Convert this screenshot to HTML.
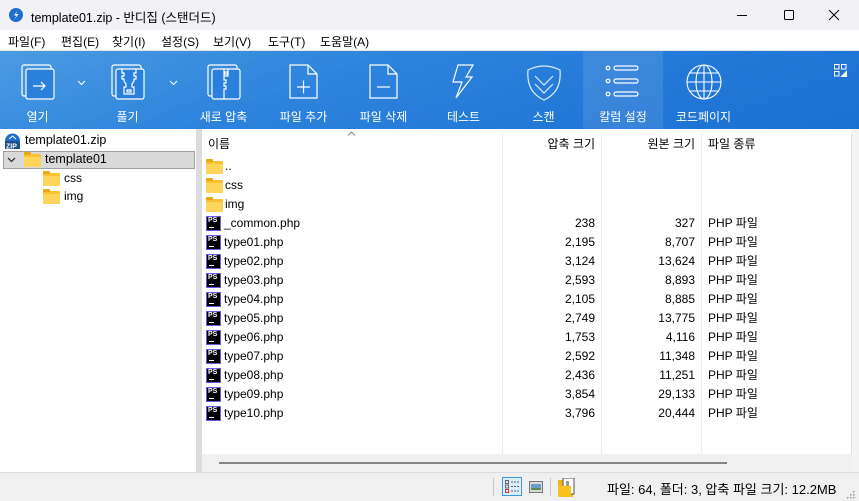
<!DOCTYPE html>
<html><head><meta charset="utf-8">
<style>
*{margin:0;padding:0;box-sizing:border-box}
body{width:859px;height:501px;overflow:hidden;background:#fff;font-family:"Liberation Sans","Noto Sans CJK KR",sans-serif;font-size:12px;color:#000;position:relative}
.abs{position:absolute}
#title{left:0;top:0;width:859px;height:30px;background:#f1f1f6}
#menu{left:0;top:30px;width:859px;height:21px;background:#fff;border-bottom:1px solid #e6e6e6}
#menu span{position:absolute;top:3px;font-size:12px}
#tb{left:0;top:51px;width:859px;height:78px;background:linear-gradient(160deg,#4b9be2 0%,#2c82dc 40%,#1a6fd2 100%)}
.btn{position:absolute;top:0;height:78px;text-align:center;color:#fff;font-size:12px}
.btn .lbl{position:absolute;left:0;right:0;top:57px}
.btn svg{position:absolute;left:50%;top:13px;transform:translateX(-50%)}
#tree{left:0;top:129px;width:196px;height:343px;background:#fff}
#split{left:196px;top:129px;width:6px;height:343px;background:#dcdcdc}
#list{left:202px;top:129px;width:657px;height:343px;background:#fff}
.vl{position:absolute;top:133px;width:1px;height:325px;background:#e8edf3}
.row{position:absolute;height:19px;line-height:19px;font-size:12px}
.ps{position:absolute;width:15px;height:15px;background:#000;border:1px solid #6a5ae8;color:#fff;font-size:7px;font-weight:bold;line-height:8px;padding-left:1px}
.ps:after{content:"";position:absolute;left:2px;top:10px;width:5px;height:1px;background:#fff}
.fold{position:absolute;width:17px;height:13px;background:#f8c232;border-radius:1px}
.fold:before{content:"";position:absolute;left:0;top:-2px;width:7px;height:3px;background:#e9a917;border-radius:1px 1px 0 0}
.fold:after{content:"";position:absolute;left:0;top:3px;width:17px;height:10px;background:#fdd45c}
.num{position:absolute;text-align:right}
#status{left:0;top:472px;width:859px;height:29px;background:#f0f0f0;border-top:1px solid #dcdcdc}
</style></head><body>
<div id="title" class="abs">
 <svg class="abs" style="left:9px;top:8px" width="14" height="14" viewBox="0 0 14 14"><circle cx="7" cy="7" r="7" fill="#1e6fd0"/><path d="M8.5 2.5 L5 7.5 H7.5 L5.5 11.5 L9.5 6 H7 Z" fill="#fff"/></svg>
 <span class="abs" style="left:31px;top:7px;font-size:12.5px">template01.zip - 반디집 (스탠더드)</span>
 <svg class="abs" style="left:736px;top:10px" width="12" height="10"><path d="M1 5.5H11" stroke="#000" stroke-width="1"/></svg>
 <svg class="abs" style="left:783px;top:9px" width="12" height="12"><rect x="1.5" y="1.5" width="9" height="9" rx="1" fill="none" stroke="#000"/></svg>
 <svg class="abs" style="left:828px;top:9px" width="12" height="12"><path d="M1 1L11 11M11 1L1 11" stroke="#000"/></svg>
</div>
<div id="menu" class="abs">
 <span style="left:8px">파일(F)</span><span style="left:61px">편집(E)</span><span style="left:112px">찾기(I)</span><span style="left:161px">설정(S)</span><span style="left:213px">보기(V)</span><span style="left:268px">도구(T)</span><span style="left:320px">도움말(A)</span>
</div>
<div id="tb" class="abs">
 <div class="btn" style="left:0;width:75px"><svg width="34" height="36" viewBox="0 0 34 36" fill="none" stroke="#fff" stroke-width="1.2"><rect x="1" y="1" width="29" height="31" rx="2"/><rect x="5" y="5" width="28" height="30" rx="2" fill="#2a80da"/><path d="M12 22H24M20 18L24 22L20 26"/></svg><div class="lbl">열기</div></div>
 <svg class="abs" style="left:77px;top:29px" width="9" height="6"><path d="M1 1L4.5 4.5L8 1" stroke="#fff" fill="none"/></svg>
 <div class="btn" style="left:90px;width:75px"><svg width="34" height="36" viewBox="0 0 34 36" fill="none" stroke="#fff" stroke-width="1.2"><rect x="1" y="1" width="29" height="31" rx="2"/><rect x="5" y="5" width="28" height="30" rx="2" fill="#2a80da"/><path d="M11 5V9H13V12H11V15H13V17L15 20V23H13V30H23V23H21V20L23 17V15H25V12H23V9H25V5"/><rect x="16" y="26" width="4" height="2"/></svg><div class="lbl">풀기</div></div>
 <svg class="abs" style="left:169px;top:29px" width="9" height="6"><path d="M1 1L4.5 4.5L8 1" stroke="#fff" fill="none"/></svg>
 <div class="btn" style="left:186px;width:75px"><svg width="34" height="36" viewBox="0 0 34 36" fill="none" stroke="#fff" stroke-width="1.2"><rect x="1" y="1" width="29" height="31" rx="2"/><rect x="5" y="5" width="28" height="30" rx="2" fill="#2a80da"/><path d="M17 5V12H21V5M17 12V16H19V19H17V22H19V25H17V35"/><rect x="17.5" y="8" width="3" height="2"/></svg><div class="lbl">새로 압축</div></div>
 <div class="btn" style="left:266px;width:75px"><svg width="34" height="36" viewBox="0 0 34 36" fill="none" stroke="#fff" stroke-width="1.2"><path d="M3 1H21L30 10V34H3Z"/><path d="M21 1V10H30"/><path d="M10 23H23M16.5 16.5V29.5"/></svg><div class="lbl">파일 추가</div></div>
 <div class="btn" style="left:346px;width:75px"><svg width="34" height="36" viewBox="0 0 34 36" fill="none" stroke="#fff" stroke-width="1.2"><path d="M3 1H21L30 10V34H3Z"/><path d="M21 1V10H30"/><path d="M10 23H23"/></svg><div class="lbl">파일 삭제</div></div>
 <div class="btn" style="left:426px;width:75px"><svg width="34" height="36" viewBox="0 0 34 36" fill="none" stroke="#fff" stroke-width="1.2"><path d="M11 1H26L19 13H25L9 34L15 18H6Z"/></svg><div class="lbl">테스트</div></div>
 <div class="btn" style="left:506px;width:75px"><svg width="40" height="38" viewBox="0 0 40 38" fill="none" stroke="#fff" stroke-width="1.2" opacity=".85"><path d="M4 6Q20 -2 36 6Q38 28 20 36Q2 28 4 6Z"/><path d="M11 12L20 21L29 12M11 20L20 29L29 20"/></svg><div class="lbl">스캔</div></div>
 <div class="btn" style="left:583px;width:80px;background:rgba(255,255,255,0.1)"><svg width="36" height="34" viewBox="0 0 36 34" fill="none" stroke="#fff" stroke-width="1.2"><circle cx="3" cy="4" r="1.8"/><circle cx="3" cy="17" r="1.8"/><circle cx="3" cy="30" r="1.8"/><rect x="9" y="2" width="24" height="4" rx="2"/><rect x="9" y="15" width="24" height="4" rx="2"/><rect x="9" y="28" width="24" height="4" rx="2"/></svg><div class="lbl">칼럼 설정</div></div>
 <div class="btn" style="left:665px;width:77px"><svg width="36" height="36" viewBox="0 0 36 36" fill="none" stroke="#fff" stroke-width="1.1"><circle cx="18" cy="18" r="17"/><ellipse cx="18" cy="18" rx="8" ry="17"/><path d="M18 1V35M1 18H35M4 9H32M4 27H32"/></svg><div class="lbl">코드페이지</div></div>
 <svg class="abs" style="left:834px;top:13px" width="13" height="13" fill="none" stroke="#fff"><rect x="0.5" y="0.5" width="4.5" height="4.5"/><rect x="7.5" y="0.5" width="4.5" height="4.5"/><rect x="0.5" y="7.5" width="4.5" height="4.5"/><path d="M12.5 7.5V12.5H7.5Z" fill="#fff"/></svg>
</div>
<div id="tree" class="abs"></div>
<svg class="abs" style="left:4px;top:133px" width="17" height="16"><path d="M1 8A7.5 7.5 0 0 1 16 8Z" fill="#1c6fd0"/><path d="M5 6L8.5 3L12 6" stroke="#fff" fill="none"/><rect x="1" y="8" width="15" height="8" fill="#1d4f8a"/><text x="2" y="15.5" font-size="7" font-weight="bold" fill="#fff" font-family="Liberation Sans">ZIP</text></svg>
<div class="row abs" style="left:25px;top:131px;font-size:12.5px">template01.zip</div>
<div class="abs" style="left:3px;top:151px;width:192px;height:18px;background:#d9d9d9;border:1px solid #a0a0a0"></div>
<svg class="abs" style="left:7px;top:157px" width="9" height="6"><path d="M1 1L4.5 4.5L8 1" stroke="#333" fill="none" stroke-width="1.3"/></svg>
<div class="fold" style="left:24px;top:154px"></div>
<div class="row abs" style="left:45px;top:150px;font-size:12.5px">template01</div>
<div class="fold" style="left:43px;top:173px"></div><div class="row abs" style="left:64px;top:169px">css</div>
<div class="fold" style="left:43px;top:191px"></div><div class="row abs" style="left:64px;top:187px">img</div>
<div id="split" class="abs"></div>
<div id="list" class="abs"></div>
<div class="vl" style="left:502px"></div><div class="vl" style="left:601px"></div><div class="vl" style="left:701px"></div><div class="vl" style="left:851px;background:#e2e2e2"></div>
<div class="abs" style="left:852px;top:129px;width:7px;height:343px;background:#f3f3f3"></div>
<svg class="abs" style="left:347px;top:131px" width="9" height="5"><path d="M1 4.5L4.5 1L8 4.5" stroke="#888" fill="none"/></svg>
<div class="row abs" style="left:208px;top:135px">이름</div>
<div class="num row" style="left:505px;width:90px;top:135px">압축 크기</div>
<div class="num row" style="left:604px;width:91px;top:135px">원본 크기</div>
<div class="row abs" style="left:708px;top:135px">파일 종류</div>

<div class="fold" style="left:206px;top:161px"></div><div class="row abs" style="left:225px;top:157px">..</div>
<div class="fold" style="left:206px;top:180px"></div><div class="row abs" style="left:225px;top:176px">css</div>
<div class="fold" style="left:206px;top:199px"></div><div class="row abs" style="left:225px;top:195px">img</div>

<div id="rows"></div>
<div class="abs" style="left:202px;top:454px;width:650px;height:18px;background:#f0f0f0"></div>
<div class="abs" style="left:219px;top:462px;width:508px;height:2px;background:#858585"></div>
<div id="status" class="abs">
 <div class="abs" style="left:493px;top:5px;width:1px;height:18px;background:#c8c8c8"></div>
 <div class="abs" style="left:502px;top:4px;width:20px;height:19px;border:1px solid #3a9ae0;background:#dcecf8"></div>
 <svg class="abs" style="left:505px;top:7px" width="15" height="13" fill="none" stroke="#666"><rect x="0.5" y="0.5" width="3" height="3"/><rect x="0.5" y="5" width="3" height="3"/><rect x="0.5" y="9.5" width="3" height="3" stroke="#c33"/><path d="M6 2H14M6 6.5H14M6 11H14" stroke-dasharray="2 1"/></svg>
 <svg class="abs" style="left:529px;top:8px" width="14" height="12"><rect x="0.5" y="0.5" width="13" height="11" fill="#ddd" stroke="#777"/><rect x="2" y="3" width="10" height="6" fill="#6a9cc8"/><rect x="2" y="7" width="10" height="2" fill="#5a8a5a"/></svg>
 <div class="abs" style="left:550px;top:5px;width:1px;height:18px;background:#c8c8c8"></div>
 <svg class="abs" style="left:558px;top:5px" width="18" height="19"><rect x="0" y="2" width="15" height="17" fill="#f6b40e"/><rect x="5" y="0" width="11" height="16" fill="#fff" stroke="#555"/><rect x="8" y="3" width="3" height="10" fill="#999"/><rect x="0" y="8" width="13" height="11" fill="#f7c21d"/></svg>
 <div class="abs" style="left:607px;top:6px;font-size:13px">파일: 64, 폴더: 3, 압축 파일 크기: 12.2MB</div>
 <svg class="abs" style="left:846px;top:17px" width="10" height="10" fill="#999"><rect x="7" y="1" width="1.5" height="1.5"/><rect x="4" y="4" width="1.5" height="1.5"/><rect x="7" y="4" width="1.5" height="1.5"/><rect x="1" y="7" width="1.5" height="1.5"/><rect x="4" y="7" width="1.5" height="1.5"/><rect x="7" y="7" width="1.5" height="1.5"/></svg>
</div>
<script>
var d=[["_common.php","238","327"],["type01.php","2,195","8,707"],["type02.php","3,124","13,624"],["type03.php","2,593","8,893"],["type04.php","2,105","8,885"],["type05.php","2,749","13,775"],["type06.php","1,753","4,116"],["type07.php","2,592","11,348"],["type08.php","2,436","11,251"],["type09.php","3,854","29,133"],["type10.php","3,796","20,444"]];
var h="";for(var i=0;i<d.length;i++){var y=214+i*19;
h+='<div class="ps" style="left:206px;top:'+(y+2)+'px">PS</div><div class="row abs" style="left:224px;top:'+y+'px">'+d[i][0]+'</div><div class="num row" style="left:505px;width:90px;top:'+y+'px">'+d[i][1]+'</div><div class="num row" style="left:604px;width:91px;top:'+y+'px">'+d[i][2]+'</div><div class="row abs" style="left:708px;top:'+y+'px">PHP 파일</div>';}
document.getElementById("rows").outerHTML=h;
</script>
</body></html>
